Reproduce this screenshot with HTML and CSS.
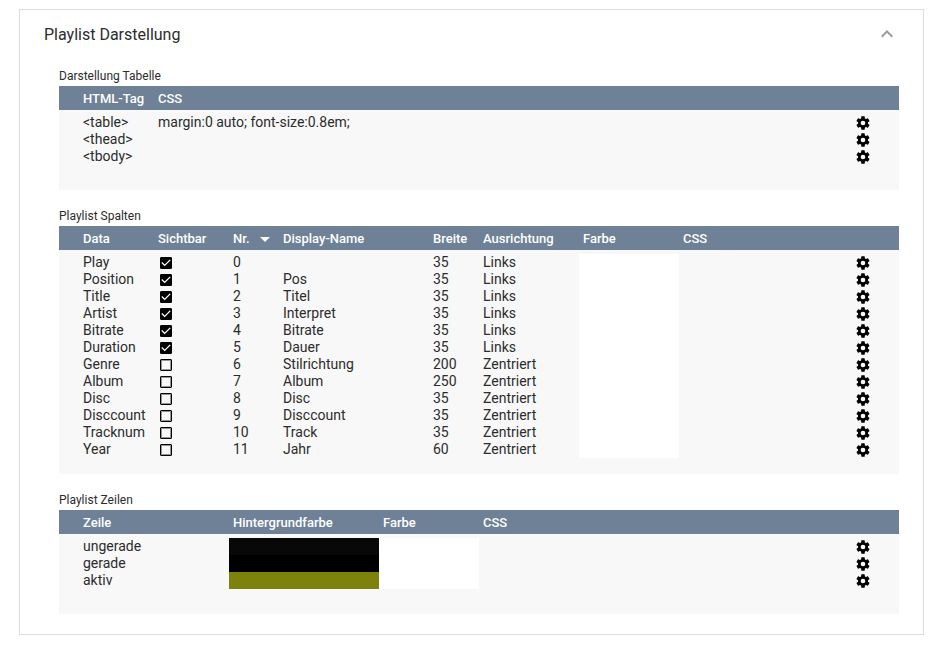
FILE: index.html
```html
<!DOCTYPE html>
<html lang="de">
<head>
<meta charset="utf-8">
<title>Playlist Darstellung</title>
<link rel="stylesheet" href="styles.css">
</head>
<body>
<svg class="sprite" aria-hidden="true">
<symbol id="cog" viewBox="0 0 24 24"><path d="M12 15.5A3.5 3.5 0 0 1 8.5 12 3.5 3.5 0 0 1 12 8.5a3.5 3.5 0 0 1 3.5 3.5 3.5 3.5 0 0 1-3.5 3.5m7.43-2.53c.04-.32.07-.64.07-.97s-.03-.66-.07-1l2.11-1.63c.19-.15.24-.42.12-.64l-2-3.46c-.12-.22-.39-.31-.61-.22l-2.49 1c-.52-.39-1.06-.73-1.69-.98l-.37-2.65A.506.506 0 0 0 14 2h-4c-.25 0-.46.18-.5.42l-.37 2.65c-.63.25-1.17.59-1.69.98l-2.49-1c-.22-.09-.49 0-.61.22l-2 3.46c-.13.22-.07.49.12.64L4.57 11c-.04.34-.07.67-.07 1s.03.65.07.97l-2.11 1.66c-.19.15-.25.42-.12.64l2 3.46c.12.22.39.3.61.22l2.49-1.01c.52.4 1.06.74 1.69.99l.37 2.65c.04.24.25.42.5.42h4c.25 0 .46-.18.5-.42l.37-2.65c.63-.26 1.17-.59 1.69-.99l2.49 1.01c.22.08.49 0 .61-.22l2-3.46c.12-.22.07-.49-.12-.64z"/></symbol>
</svg>
<main class="panel">
<header class="panel-header">
<h1>Playlist Darstellung</h1>
<button class="toggle" type="button" aria-label="Zuklappen"><svg viewBox="0 0 24 24"><path d="M7.41 15.41 12 10.83l4.59 4.58L18 14l-6-6-6 6z"/></svg></button>
</header>
<div class="panel-body">

<section>
<h2 id="t1">Darstellung Tabelle</h2>
<div class="grid">
<table aria-labelledby="t1">
<colgroup><col class="first"><col><col class="action"></colgroup>
<thead><tr><th>HTML-Tag</th><th>CSS</th><th></th></tr></thead>
<tbody>
<tr><td>&lt;table&gt;</td><td>margin:0 auto; font-size:0.8em;</td><td><button class="edit" type="button" aria-label="Bearbeiten"><svg><use href="#cog"/></svg></button></td></tr>
<tr><td>&lt;thead&gt;</td><td></td><td><button class="edit" type="button" aria-label="Bearbeiten"><svg><use href="#cog"/></svg></button></td></tr>
<tr><td>&lt;tbody&gt;</td><td></td><td><button class="edit" type="button" aria-label="Bearbeiten"><svg><use href="#cog"/></svg></button></td></tr>
</tbody>
</table>
</div>
</section>

<section>
<h2 id="t2">Playlist Spalten</h2>
<div class="grid">
<table aria-labelledby="t2">
<colgroup><col class="first"><col class="w75"><col class="w50"><col class="w150"><col class="w50"><col class="w100"><col class="w100"><col><col class="action"></colgroup>
<thead><tr><th>Data</th><th>Sichtbar</th><th><button class="sort" type="button">Nr.<span class="caret"></span></button></th><th>Display-Name</th><th>Breite</th><th>Ausrichtung</th><th>Farbe</th><th>CSS</th><th></th></tr></thead>
<tbody>
<tr><td>Play</td><td><input type="checkbox" aria-label="Play" checked></td><td>0</td><td></td><td>35</td><td>Links</td><td class="white"></td><td></td><td><button class="edit" type="button" aria-label="Bearbeiten"><svg><use href="#cog"/></svg></button></td></tr>
<tr><td>Position</td><td><input type="checkbox" aria-label="Position" checked></td><td>1</td><td>Pos</td><td>35</td><td>Links</td><td class="white"></td><td></td><td><button class="edit" type="button" aria-label="Bearbeiten"><svg><use href="#cog"/></svg></button></td></tr>
<tr><td>Title</td><td><input type="checkbox" aria-label="Title" checked></td><td>2</td><td>Titel</td><td>35</td><td>Links</td><td class="white"></td><td></td><td><button class="edit" type="button" aria-label="Bearbeiten"><svg><use href="#cog"/></svg></button></td></tr>
<tr><td>Artist</td><td><input type="checkbox" aria-label="Artist" checked></td><td>3</td><td>Interpret</td><td>35</td><td>Links</td><td class="white"></td><td></td><td><button class="edit" type="button" aria-label="Bearbeiten"><svg><use href="#cog"/></svg></button></td></tr>
<tr><td>Bitrate</td><td><input type="checkbox" aria-label="Bitrate" checked></td><td>4</td><td>Bitrate</td><td>35</td><td>Links</td><td class="white"></td><td></td><td><button class="edit" type="button" aria-label="Bearbeiten"><svg><use href="#cog"/></svg></button></td></tr>
<tr><td>Duration</td><td><input type="checkbox" aria-label="Duration" checked></td><td>5</td><td>Dauer</td><td>35</td><td>Links</td><td class="white"></td><td></td><td><button class="edit" type="button" aria-label="Bearbeiten"><svg><use href="#cog"/></svg></button></td></tr>
<tr><td>Genre</td><td><input type="checkbox" aria-label="Genre"></td><td>6</td><td>Stilrichtung</td><td>200</td><td>Zentriert</td><td class="white"></td><td></td><td><button class="edit" type="button" aria-label="Bearbeiten"><svg><use href="#cog"/></svg></button></td></tr>
<tr><td>Album</td><td><input type="checkbox" aria-label="Album"></td><td>7</td><td>Album</td><td>250</td><td>Zentriert</td><td class="white"></td><td></td><td><button class="edit" type="button" aria-label="Bearbeiten"><svg><use href="#cog"/></svg></button></td></tr>
<tr><td>Disc</td><td><input type="checkbox" aria-label="Disc"></td><td>8</td><td>Disc</td><td>35</td><td>Zentriert</td><td class="white"></td><td></td><td><button class="edit" type="button" aria-label="Bearbeiten"><svg><use href="#cog"/></svg></button></td></tr>
<tr><td>Disccount</td><td><input type="checkbox" aria-label="Disccount"></td><td>9</td><td>Disccount</td><td>35</td><td>Zentriert</td><td class="white"></td><td></td><td><button class="edit" type="button" aria-label="Bearbeiten"><svg><use href="#cog"/></svg></button></td></tr>
<tr><td>Tracknum</td><td><input type="checkbox" aria-label="Tracknum"></td><td>10</td><td>Track</td><td>35</td><td>Zentriert</td><td class="white"></td><td></td><td><button class="edit" type="button" aria-label="Bearbeiten"><svg><use href="#cog"/></svg></button></td></tr>
<tr><td>Year</td><td><input type="checkbox" aria-label="Year"></td><td>11</td><td>Jahr</td><td>60</td><td>Zentriert</td><td class="white"></td><td></td><td><button class="edit" type="button" aria-label="Bearbeiten"><svg><use href="#cog"/></svg></button></td></tr>
</tbody>
</table>
</div>
</section>

<section>
<h2 id="t3">Playlist Zeilen</h2>
<div class="grid">
<table aria-labelledby="t3">
<colgroup><col class="first-wide"><col class="w150"><col class="w100"><col><col class="action"></colgroup>
<thead><tr><th>Zeile</th><th>Hintergrundfarbe</th><th>Farbe</th><th>CSS</th><th></th></tr></thead>
<tbody>
<tr><td>ungerade</td><td class="odd"></td><td class="white"></td><td></td><td><button class="edit" type="button" aria-label="Bearbeiten"><svg><use href="#cog"/></svg></button></td></tr>
<tr><td>gerade</td><td class="even"></td><td class="white"></td><td></td><td><button class="edit" type="button" aria-label="Bearbeiten"><svg><use href="#cog"/></svg></button></td></tr>
<tr><td>aktiv</td><td class="active"></td><td class="white"></td><td></td><td><button class="edit" type="button" aria-label="Bearbeiten"><svg><use href="#cog"/></svg></button></td></tr>
</tbody>
</table>
</div>
</section>

</div>
</main>
</body>
</html>
```
FILE: styles.css
```css
* { box-sizing: border-box; }
body {
  margin: 0;
  background: #fff;
  color: #2c2c2c;
  font-family: Roboto, "Liberation Sans", sans-serif;
  font-size: 14px;
}
button {
  display: block;
  padding: 0;
  border: 0;
  background: none;
  font: inherit;
  color: inherit;
  cursor: pointer;
}
.sprite { display: none; }
.panel {
  margin: 9px 13px 20px 19px;
  border: 1px solid #ddd;
}
.panel-header {
  display: flex;
  align-items: center;
  justify-content: space-between;
  height: 48px;
  padding: 0 24px;
}
h1 {
  margin: 0;
  font-size: 16px;
  font-weight: 400;
}
.toggle svg {
  display: block;
  width: 24px;
  height: 24px;
  fill: #999;
}
.panel-body {
  display: flex;
  flex-direction: column;
  gap: 16px;
  padding: 8px 24px 20px 39px;
}
h2 {
  margin: 0;
  font-size: 12px;
  font-weight: 400;
  line-height: 20px;
}
.grid {
  min-height: 104px;
  padding-bottom: 16px;
  background: #f8f8f8;
}
table {
  width: 100%;
  table-layout: fixed;
  border-collapse: separate;
  border-spacing: 0;
}
.first { width: 95px; }
.first-wide { width: 170px; }
.w50 { width: 50px; }
.w75 { width: 75px; }
.w100 { width: 100px; }
.w150 { width: 150px; }
.action { width: 48px; }
th {
  height: 28px;
  padding: 2px 4px 0;
  border-bottom: 4px solid #f8f8f8;
  background: #6e8196;
  background-clip: padding-box;
  color: #fff;
  font-size: 13px;
  font-weight: 500;
  line-height: 22px;
  text-align: left;
  white-space: nowrap;
}
td {
  height: 17px;
  padding: 0 4px;
  line-height: 17px;
  white-space: nowrap;
}
th:first-child,
td:first-child { padding-left: 24px; }
.sort {
  display: flex;
  align-items: center;
  justify-content: space-between;
  width: 37px;
}
.caret {
  border: 5px solid transparent;
  border-top-color: #fff;
  border-bottom: 0;
}
.edit svg {
  display: block;
  width: 16px;
  height: 16px;
  margin-top: 1px;
  fill: #000;
}
input {
  appearance: none;
  display: block;
  width: 12px;
  height: 12px;
  margin: 3px 2px 2px;
  border: 1px solid #000;
  border-radius: 1px;
  box-shadow: inset 0 0 0 1px #0006;
}
input:checked {
  background: #000;
  box-shadow: none;
}
input:checked::before {
  content: "";
  display: block;
  width: 12px;
  height: 12px;
  margin: -1px;
  background: #fff;
  clip-path: polygon(39% 78%, 11% 50%, 19% 42%, 39% 62%, 81% 20%, 89% 28%);
}
.white { background: #fff; }
.odd { background: #080808; }
.even { background: #000; }
.active { background: #7c820c; }
```
